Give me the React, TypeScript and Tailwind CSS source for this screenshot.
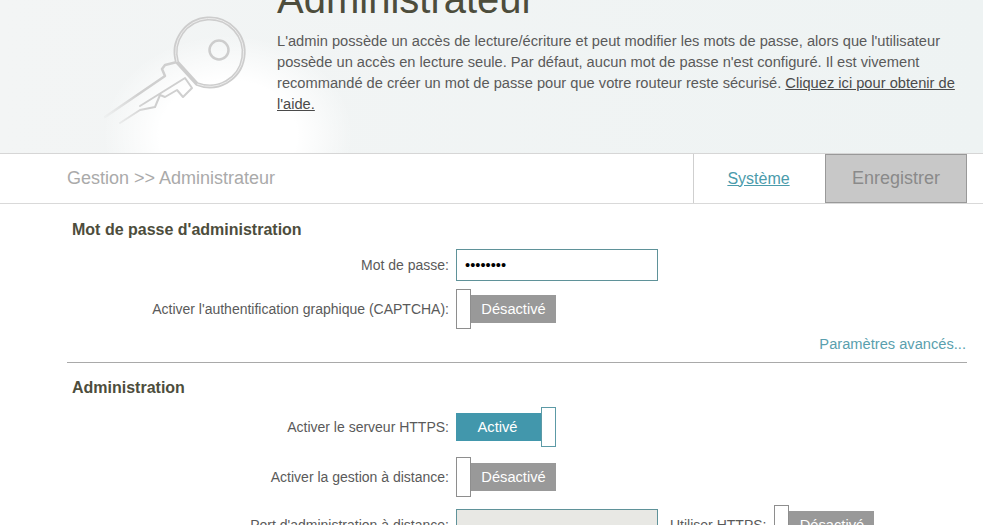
import React from 'react';

const KeyIcon = () => (
  <svg width="170" height="125" viewBox="90 10 170 125" fill="none">
    <defs>
      <linearGradient id="fade" gradientUnits="userSpaceOnUse" x1="103" y1="124" x2="140" y2="96">
        <stop offset="0" stopColor="#cfcfcf" stopOpacity="0" />
        <stop offset="1" stopColor="#cfcfcf" />
      </linearGradient>
    </defs>
    <g stroke="url(#fade)" strokeWidth="2.5" strokeLinejoin="round" strokeLinecap="round">
      <path d="M105 117L165 76L162 69L165 65L177 62" />
      <path d="M120 123L140 110L155 107L160 95L165 97L177 90L183 97L192 88L185 78L140 106" strokeWidth="2" />
    </g>
    <g stroke="#cdcdcd" strokeWidth="4">
      <path d="M177 62A34 34 0 1 1 197 84L177 62" strokeLinejoin="round" />
      <circle cx="219" cy="50" r="9.5" strokeWidth="2.5" />
    </g>
    <path d="M177 62A34 34 0 1 1 197 84" stroke="#ececec" strokeWidth="1" />
  </svg>
);

const Toggle = ({ on = false }: { on?: boolean }) => (
  <div className="flex h-[40px] w-[100px] items-center">
    {on ? (
      <>
        <div className="flex h-[28px] flex-1 items-center justify-center bg-[#4297ac] pr-[2px] text-[14.67px] text-white">Activé</div>
        <div className="h-[40px] w-[15px] border border-[#5c9aa6] bg-white" />
      </>
    ) : (
      <>
        <div className="h-[40px] w-[15px] border border-[#8e8e8e] bg-white" />
        <div className="flex h-[28px] flex-1 items-center justify-center bg-[#999999] text-[14.67px] text-white">Désactivé</div>
      </>
    )}
  </div>
);

const Row = ({ label, className, children }: { label: string; className?: string; children: React.ReactNode }) => (
  <div className={`flex items-center ${className ?? ''}`}>
    <div className="w-[382px] shrink-0 text-right text-[14px] leading-[18px] text-[#5a5a5a]">{label}</div>
    <div className="ml-[7px] flex items-center">{children}</div>
  </div>
);

export default function App() {
  return (
    <div className="h-[525px] w-[983px] overflow-hidden bg-white font-['Liberation_Sans',Arial,sans-serif]">
      <header className="flex h-[154px] overflow-hidden border-b border-[#d6d6d6] bg-[radial-gradient(ellipse_125px_100px_at_228px_135px,#ffffff_55%,#ffffff00_100%),linear-gradient(90deg,#f3f5f5_0%,#eef3f3_100%)]">
        <div className="ml-[90px] mt-[10px] h-[125px] w-[170px] shrink-0">
          <KeyIcon />
        </div>
        <div className="ml-[17px] w-[690px]">
          <h1 className="mt-[-21px] text-[40px] leading-[40px] text-[#4d4d3c]">Administrateur</h1>
          <p className="mt-[12px] text-[14.67px] leading-[21px] text-[#5a5a5a]">
            L'admin possède un accès de lecture/écriture et peut modifier les mots de passe, alors que l'utilisateur possède un accès en lecture seule. Par défaut, aucun mot de passe n'est configuré. Il est vivement recommandé de créer un mot de passe pour que votre routeur reste sécurisé.{' '}
            <a className="text-[#4a4a4a] underline">Cliquez ici pour obtenir de l'aide.</a>
          </p>
        </div>
      </header>

      <div className="flex h-[50px] items-stretch border-b border-[#d9d9d9] pl-[67px] pr-[16px]">
        <div className="flex flex-1 items-center text-[18px] text-[#aaaaaa]">Gestion &gt;&gt; Administrateur</div>
        <div className="flex w-[132px] items-center justify-center border-l border-[#cfcfcf] pr-[2px] text-[16px] text-[#4a9bab] underline">Système</div>
        <div className="flex w-[142px] items-center justify-center border border-[#999999] bg-[#c8c8c8] text-[18px] text-[#8a8a8a]">Enregistrer</div>
      </div>

      <section className="ml-[67px] mr-[16px] border-b border-[#a9a9a9] pb-[9px] pt-[17px]">
        <h2 className="ml-[5px] text-[16px] font-bold leading-[18px] text-[#4d4d3c]">Mot de passe d'administration</h2>
        <Row label="Mot de passe:" className="mt-[10px]">
          <input
            type="password"
            readOnly
            value="12345678"
            className="h-[32px] w-[202px] border border-[#5f9299] bg-white px-[8px] text-[14.67px] text-black outline-none"
          />
        </Row>
        <Row label="Activer l'authentification graphique (CAPTCHA):" className="mt-[8px]">
          <Toggle />
        </Row>
        <div className="mt-[6px] pr-[1px] text-right text-[14.67px] leading-[18px] text-[#5a9fae]">Paramètres avancés...</div>
      </section>

      <section className="ml-[67px] mr-[16px] pt-[16px]">
        <h2 className="ml-[5px] text-[16px] font-bold leading-[18px] text-[#4d4d3c]">Administration</h2>
        <Row label="Activer le serveur HTTPS:" className="mt-[10px]">
          <Toggle on />
        </Row>
        <Row label="Activer la gestion à distance:" className="mt-[10px]">
          <Toggle />
        </Row>
        <Row label="Port d'administration à distance:" className="mt-[8px]">
          <div className="h-[32px] w-[202px] border border-[#5f9299] bg-[#e8e8e4]" />
          <span className="ml-[12px] text-[14px] leading-[18px] text-[#5a5a5a]">Utiliser HTTPS:</span>
          <div className="ml-[8px]">
            <Toggle />
          </div>
        </Row>
      </section>
    </div>
  );
}
